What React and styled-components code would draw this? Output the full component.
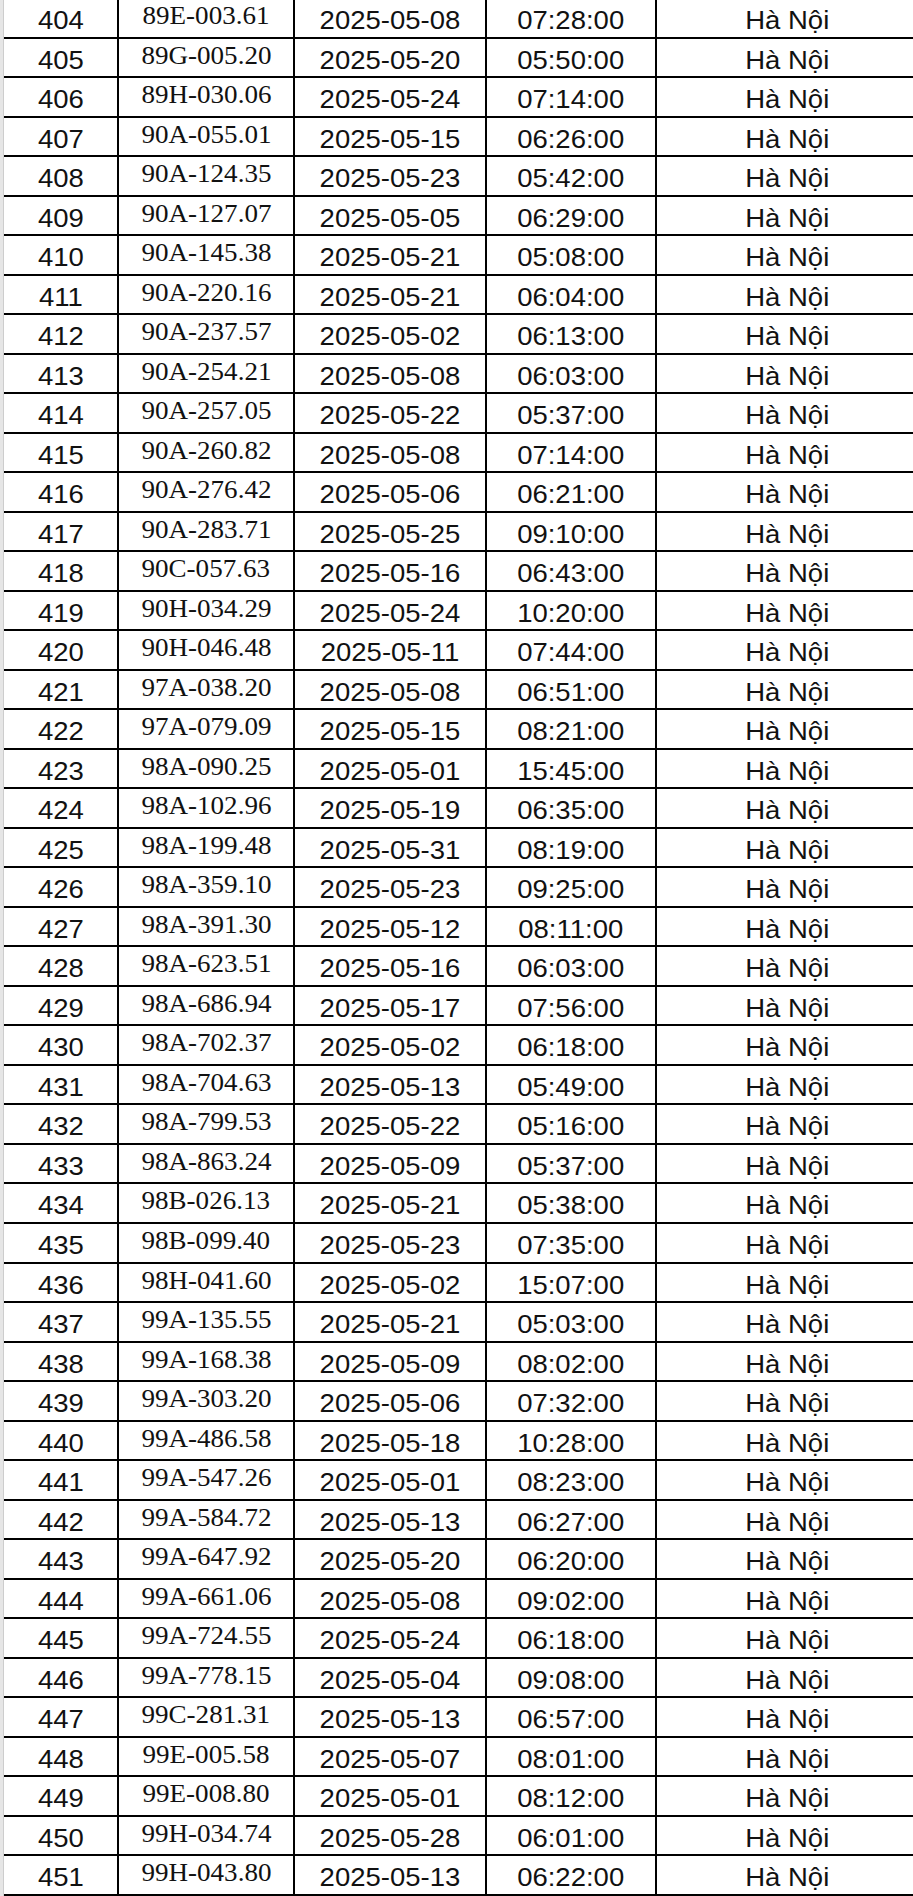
import React from 'react';
import styled, { createGlobalStyle } from 'styled-components';

const GlobalStyle = createGlobalStyle`
  html, body {
    margin: 0;
    padding: 0;
    background: #fff;
    overflow: hidden;
  }
`

const Page = styled.div`
  display: flex;
  width: 913px;
  height: 1896px;
  overflow: hidden;
`

const Gutter = styled.div`
  flex: 0 0 3px;
  background: #e6e6e6;
  border-right: 1px solid #cdcdcd;
`

const Table = styled.div`
  display: flex;
  flex-direction: column;
  margin-top: -1px;
`

const Row = styled.div`
  display: grid;
  grid-template-columns: 115px 176px 192px 170px 260px;
  height: 39.64px;
  box-sizing: border-box;
  border-bottom: 2px solid #000;
`

const Cell = styled.div`
  box-sizing: border-box;
  border-right: ${({ last }) => (last ? 'none' : '2px solid #000')};
  text-align: center;
  white-space: nowrap;
  color: #111;
  padding-top: ${({ serif }) => (serif ? '4px' : '9px')};
  font-family: ${({ serif }) =>
    serif ? '"Liberation Serif", "Times New Roman", serif' : '"Liberation Sans", Arial, sans-serif'};
  font-size: ${({ serif }) => (serif ? '26px' : '25px')};
  line-height: ${({ serif }) => (serif ? '26px' : '25px')};
`

// the sheet is printed a little stretched sideways
const Wide = styled.span`
  display: inline-block;
  transform: scaleX(${({ amount }) => amount || 1.1});
`

const rows = `404 89E-003.61 2025-05-08 07:28:00
405 89G-005.20 2025-05-20 05:50:00
406 89H-030.06 2025-05-24 07:14:00
407 90A-055.01 2025-05-15 06:26:00
408 90A-124.35 2025-05-23 05:42:00
409 90A-127.07 2025-05-05 06:29:00
410 90A-145.38 2025-05-21 05:08:00
411 90A-220.16 2025-05-21 06:04:00
412 90A-237.57 2025-05-02 06:13:00
413 90A-254.21 2025-05-08 06:03:00
414 90A-257.05 2025-05-22 05:37:00
415 90A-260.82 2025-05-08 07:14:00
416 90A-276.42 2025-05-06 06:21:00
417 90A-283.71 2025-05-25 09:10:00
418 90C-057.63 2025-05-16 06:43:00
419 90H-034.29 2025-05-24 10:20:00
420 90H-046.48 2025-05-11 07:44:00
421 97A-038.20 2025-05-08 06:51:00
422 97A-079.09 2025-05-15 08:21:00
423 98A-090.25 2025-05-01 15:45:00
424 98A-102.96 2025-05-19 06:35:00
425 98A-199.48 2025-05-31 08:19:00
426 98A-359.10 2025-05-23 09:25:00
427 98A-391.30 2025-05-12 08:11:00
428 98A-623.51 2025-05-16 06:03:00
429 98A-686.94 2025-05-17 07:56:00
430 98A-702.37 2025-05-02 06:18:00
431 98A-704.63 2025-05-13 05:49:00
432 98A-799.53 2025-05-22 05:16:00
433 98A-863.24 2025-05-09 05:37:00
434 98B-026.13 2025-05-21 05:38:00
435 98B-099.40 2025-05-23 07:35:00
436 98H-041.60 2025-05-02 15:07:00
437 99A-135.55 2025-05-21 05:03:00
438 99A-168.38 2025-05-09 08:02:00
439 99A-303.20 2025-05-06 07:32:00
440 99A-486.58 2025-05-18 10:28:00
441 99A-547.26 2025-05-01 08:23:00
442 99A-584.72 2025-05-13 06:27:00
443 99A-647.92 2025-05-20 06:20:00
444 99A-661.06 2025-05-08 09:02:00
445 99A-724.55 2025-05-24 06:18:00
446 99A-778.15 2025-05-04 09:08:00
447 99C-281.31 2025-05-13 06:57:00
448 99E-005.58 2025-05-07 08:01:00
449 99E-008.80 2025-05-01 08:12:00
450 99H-034.74 2025-05-28 06:01:00
451 99H-043.80 2025-05-13 06:22:00`
  .split('\n')
  .map((line) => line.split(' '))

const App = () => (
  <React.Fragment>
    <GlobalStyle />
    <Page>
      <Gutter />
      <Table>
        {rows.map(([no, plate, date, time]) => (
          <Row key={no}>
            <Cell><Wide>{no}</Wide></Cell>
            <Cell serif><Wide amount={1.04}>{plate}</Wide></Cell>
            <Cell><Wide>{date}</Wide></Cell>
            <Cell><Wide>{time}</Wide></Cell>
            <Cell last><Wide>Hà Nội</Wide></Cell>
          </Row>
        ))}
      </Table>
    </Page>
  </React.Fragment>
)

export default App
